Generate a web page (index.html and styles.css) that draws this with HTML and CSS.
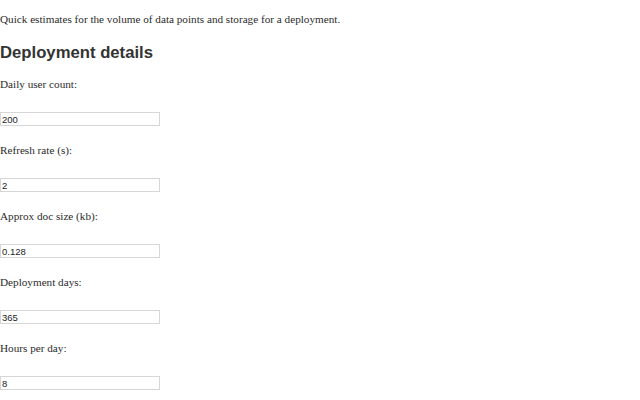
FILE: index.html
```html
<!DOCTYPE html>
<html lang="en">

<head>
    <meta charset="UTF-8">
    <meta name="viewport" content="width=device-width, initial-scale=1.0">
    <title>Deployment estimates</title>
    <link rel="stylesheet" href="styles.css">
</head>

<body>
    <p class="intro">Quick estimates for the volume of data points and storage for a deployment.</p>

    <h2 class="title">Deployment details</h2>

    <form class="details">
        <label for="users">Daily user count:</label>
        <input type="text" id="users" name="users" value="200">

        <label for="refresh">Refresh rate (s):</label>
        <input type="text" id="refresh" name="refresh" value="2">

        <label for="docsize">Approx doc size (kb):</label>
        <input type="text" id="docsize" name="docsize" value="0.128">

        <label for="days">Deployment days:</label>
        <input type="text" id="days" name="days" value="365">

        <label for="hours">Hours per day:</label>
        <input type="text" id="hours" name="hours" value="8">
    </form>
</body>

</html>
```

FILE: styles.css
```css
body {
    margin: 0;
    font-family: "Liberation Serif", "Times New Roman", serif;
    font-size: 11.2px;
    color: #2b2b2b;
}

.intro {
    margin: 10px 0 0;
    line-height: 18px;
}

.title {
    font-family: "Liberation Sans", Arial, sans-serif;
    font-size: 16.7px;
    line-height: 20px;
    margin: 15px 0 12px;
    color: #333;
}

label {
    display: block;
    line-height: 18px;
    margin-bottom: 19px;
}

input {
    display: block;
    box-sizing: border-box;
    width: 160px;
    height: 14px;
    margin: 0 0 15px;
    padding: 0 1px;
    border: 1px solid #d6d6d6;
    font-family: "Liberation Sans", Arial, sans-serif;
    font-size: 9.5px;
    color: #222;
    background: #fff;
}
```
